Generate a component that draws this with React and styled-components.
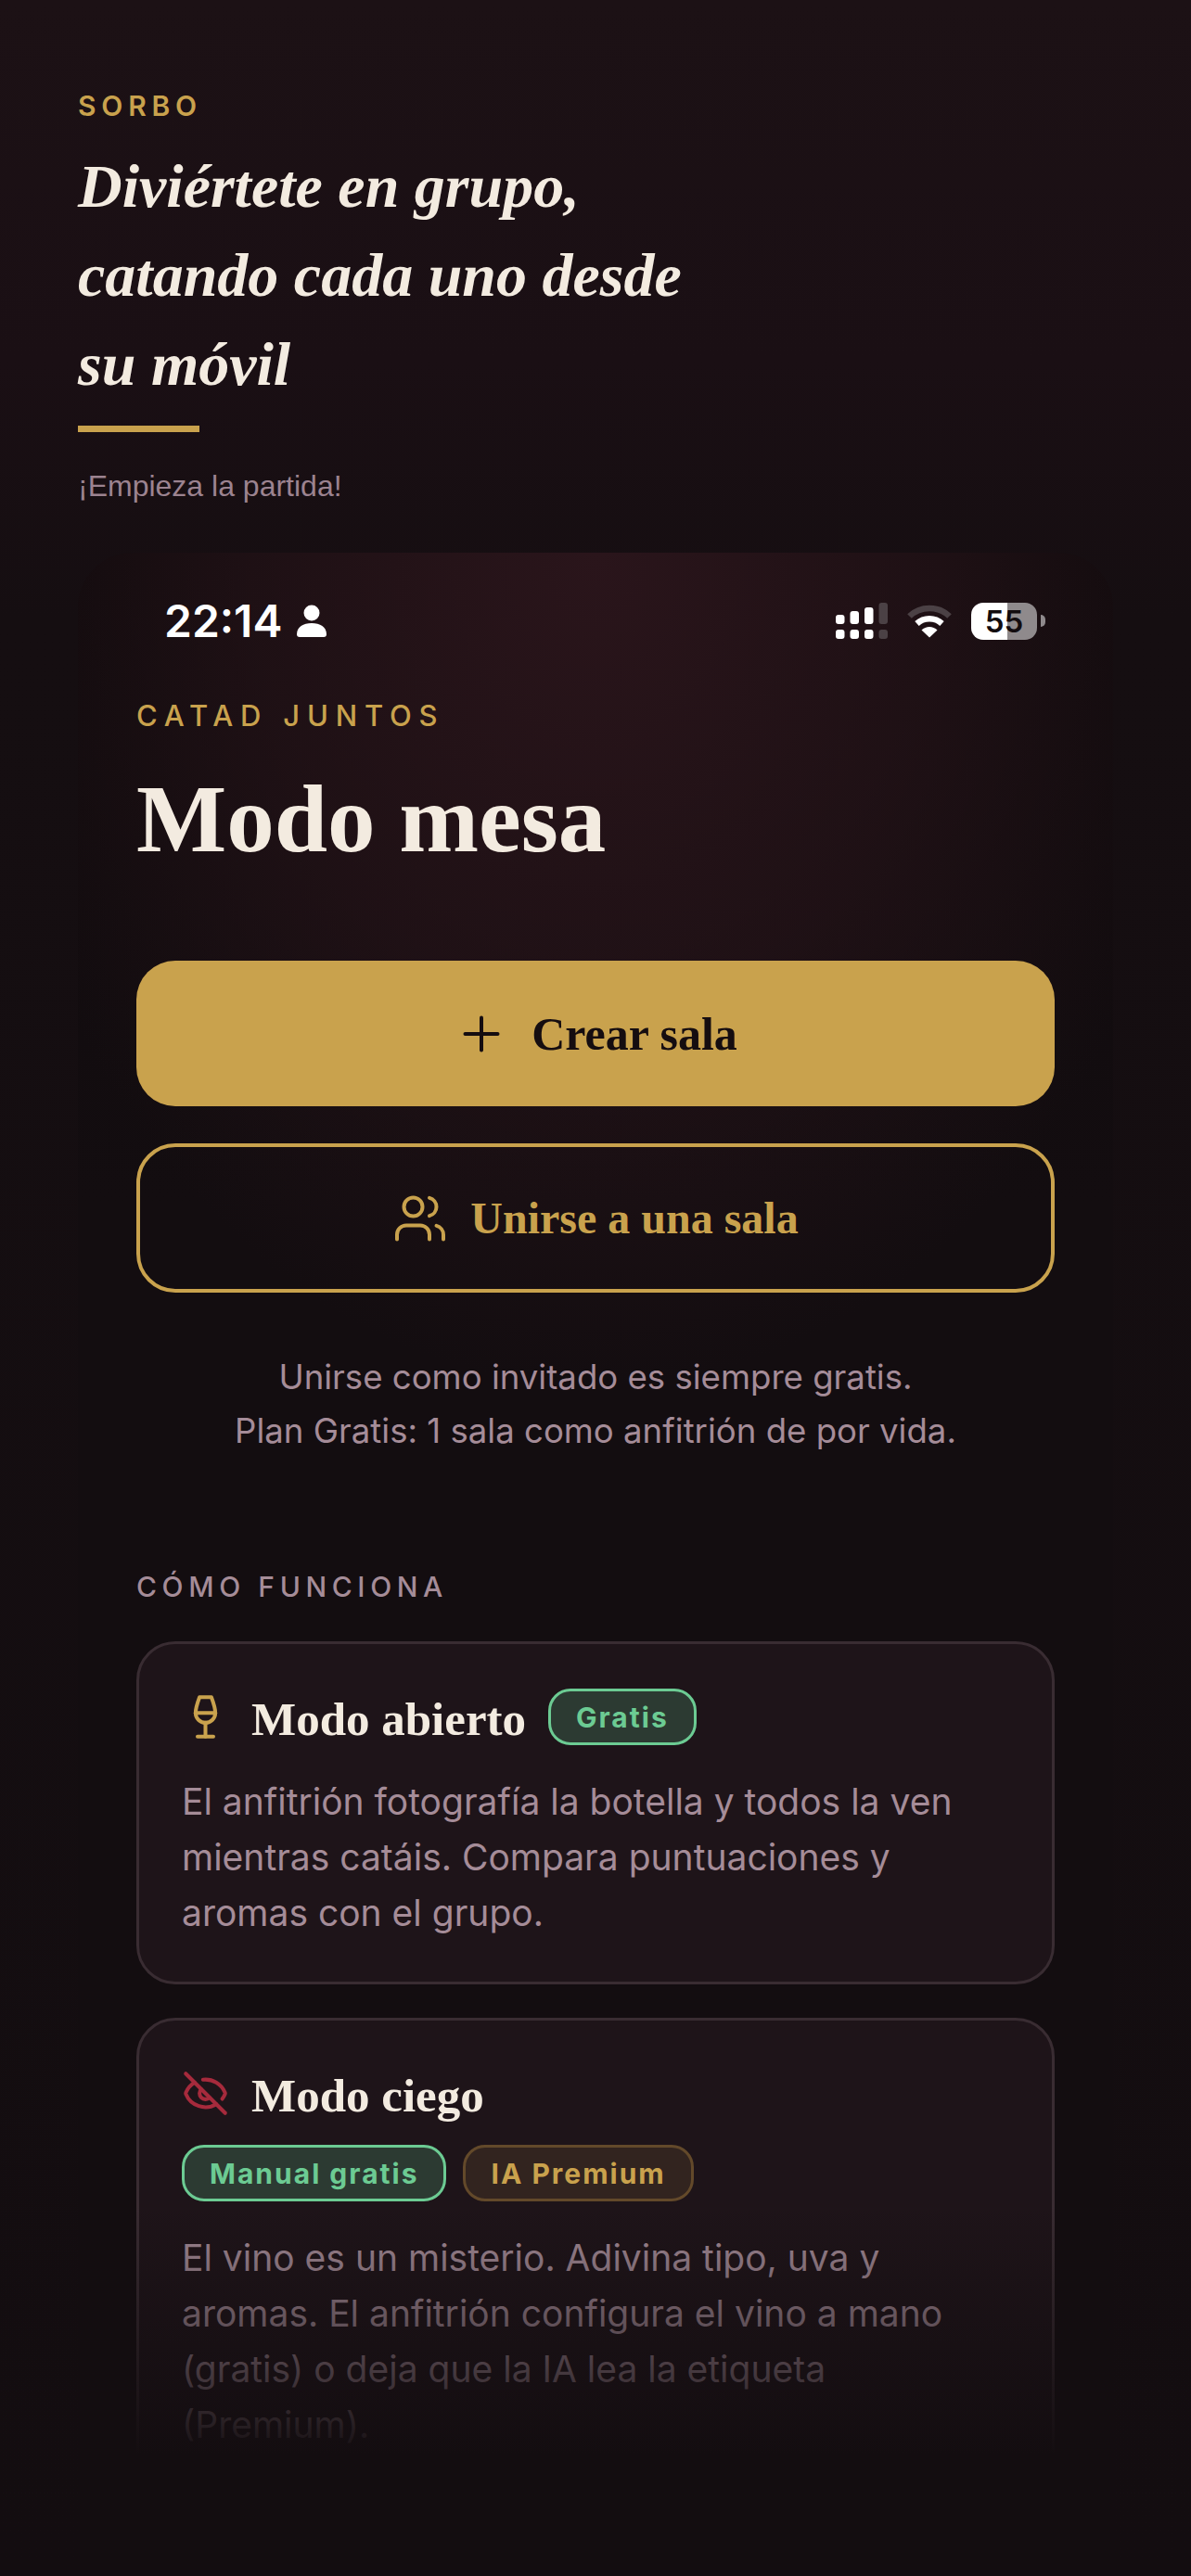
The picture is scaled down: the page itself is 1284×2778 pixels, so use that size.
import React from "react";
import styled, { createGlobalStyle } from "styled-components";
import { Plus, Users, Wine, EyeOff } from "lucide-react";

const GlobalStyle = createGlobalStyle`
  html, body {
    margin: 0;
    padding: 0;
    background: #130d10;
  }
  * {
    box-sizing: border-box;
  }
`;

const Page = styled.div`
  width: 1284px;
  height: 2778px;
  overflow: hidden;
  padding: 98px 84px 0;
  background: linear-gradient(180deg, #1c1115 0%, #1a0f14 14%, #150e11 24%, #130d10 100%);
  font-family: Inter, "Liberation Sans", sans-serif;
`;

const Hero = styled.header`
  display: flex;
  flex-direction: column;
  align-items: flex-start;
`;

const Brand = styled.div`
  font-size: 30px;
  line-height: 33px;
  font-weight: 600;
  letter-spacing: 5.8px;
  color: #c9a24d;
`;

const Tagline = styled.h1`
  margin: 22px 0 0;
  width: 700px;
  font-family: "Liberation Serif", serif;
  font-style: italic;
  font-weight: 700;
  font-size: 66px;
  line-height: 96px;
  color: #f3ebe0;
`;

const Rule = styled.div`
  width: 131px;
  height: 7px;
  margin-top: 18px;
  background: #c9a24d;
`;

const Sub = styled.p`
  margin: 40px 0 0;
  font-family: "Liberation Sans", sans-serif;
  font-size: 32px;
  line-height: 36px;
  color: #9c8390;
`;

const Screen = styled.main`
  position: relative;
  height: 2182px;
  margin-top: 54px;
  overflow: hidden;
  border-radius: 60px 60px 0 0;
  background:
    radial-gradient(ellipse 680px 900px at 50% 0, #2a151b 0%, rgba(42, 21, 27, 0.55) 55%, rgba(42, 21, 27, 0) 100%),
    linear-gradient(180deg, #0f0a0c 0, #130d10 700px);
`;

const StatusBar = styled.div`
  display: flex;
  align-items: center;
  justify-content: space-between;
  padding: 50px 82px 0 93px;
  height: 98px;
`;

const StatusGroup = styled.div`
  display: flex;
  align-items: center;
  gap: ${(p) => p.$gap}px;
`;

const Clock = styled.span`
  font-size: 48px;
  line-height: 48px;
  font-weight: 600;
  color: #fff;
`;

const Battery = styled.div`
  position: relative;
  width: 71px;
  height: 40px;
  border-radius: 13px;
  display: flex;
  align-items: center;
  justify-content: center;
  background: linear-gradient(90deg, #fff 0, #fff 55%, #8f8a8c 55%, #8f8a8c 100%);
  color: #120c0f;
  font-size: 33px;
  font-weight: 600;
  line-height: 40px;
  &::after {
    content: "";
    position: absolute;
    right: -9px;
    top: 13px;
    width: 5px;
    height: 13px;
    border-radius: 0 5px 5px 0;
    background: #8f8a8c;
  }
`;

const Content = styled.div`
  padding: 60px 63px 0;
`;

const Eyebrow = styled.div`
  font-size: 31px;
  line-height: 36px;
  font-weight: 500;
  letter-spacing: 7.8px;
  color: #c9a24d;
`;

const Title = styled.h2`
  margin: 27px 0 0;
  font-family: "Liberation Serif", serif;
  font-weight: 700;
  font-size: 103px;
  line-height: 132px;
  color: #f3ebe0;
`;

const Actions = styled.div`
  display: flex;
  flex-direction: column;
  gap: 40px;
  margin-top: 87px;
`;

const Action = styled.button`
  display: flex;
  align-items: center;
  justify-content: center;
  gap: 24px;
  width: 100%;
  height: ${(p) => (p.$outline ? 161 : 157)}px;
  border-radius: 42px;
  border: ${(p) => (p.$outline ? "4.5px solid #c9a24d" : "none")};
  background: ${(p) => (p.$outline ? "transparent" : "#c9a24d")};
  color: ${(p) => (p.$outline ? "#c9a24d" : "#150d10")};
  font-family: "Liberation Serif", serif;
  font-weight: 700;
  font-size: ${(p) => (p.$outline ? 48 : 50)}px;
  padding: 0;
`;

const Note = styled.p`
  margin: 63px 0 0;
  text-align: center;
  font-size: 36.6px;
  line-height: 57.6px;
  color: #a58c98;
`;

const SectionLabel = styled.div`
  margin-top: 121px;
  font-size: 30px;
  line-height: 36px;
  font-weight: 500;
  letter-spacing: 5.6px;
  color: #a58c98;
`;

const CardList = styled.div`
  display: flex;
  flex-direction: column;
  gap: 36px;
  margin-top: 41px;
`;

const Card = styled.article`
  padding: 48px 46px 44px;
  border: 3px solid #392c32;
  border-radius: 42px;
  background: #1e1419;
`;

const CardHead = styled.div`
  display: flex;
  align-items: center;
  gap: 24px;
  min-height: 61px;
`;

const CardTitle = styled.h3`
  margin: 0;
  padding-top: 4px;
  font-family: "Liberation Serif", serif;
  font-weight: 700;
  font-size: 51px;
  line-height: 56px;
  color: #f3ebe0;
`;

const Badge = styled.span`
  display: inline-flex;
  align-items: center;
  height: 61px;
  padding: 0 27px;
  border-radius: 24px;
  border: 3px solid ${(p) => (p.$tone === "gold" ? "#63492a" : "#6ccb93")};
  background: ${(p) => (p.$tone === "gold" ? "#32241f" : "#2c3a32")};
  color: ${(p) => (p.$tone === "gold" ? "#c9a24d" : "#6ccb93")};
  font-size: 30px;
  font-weight: 700;
  letter-spacing: 2px;
`;

const BadgeRow = styled.div`
  display: flex;
  gap: 18px;
  margin-top: 25px;
`;

const CardText = styled.p`
  margin: 31px 0 0;
  font-size: 39px;
  line-height: 60px;
  color: #a58c98;
`;

const BottomFade = styled.div`
  position: absolute;
  left: 0;
  right: 0;
  bottom: 0;
  height: 400px;
  background: linear-gradient(180deg, rgba(19, 13, 16, 0) 0%, rgba(19, 13, 16, 0.95) 65%, #130d10 67%, #130d10 100%);
  pointer-events: none;
`;

function PersonGlyph() {
  return (
    <svg width="34" height="36" viewBox="0 0 34 36" fill="#fff">
      <circle cx="17" cy="9" r="8.5" />
      <path d="M1 32c0-8 7-12 16-12s16 4 16 12c0 2-1 3-3 3H4c-2 0-3-1-3-3z" />
    </svg>
  );
}

function SignalGlyph() {
  const bars = [
    { x: 0, top: 13, fill: "#fff" },
    { x: 15.5, top: 9, fill: "#fff" },
    { x: 31, top: 5, fill: "#fff" },
    { x: 46.5, top: 0, fill: "#4b4145" },
  ];
  return (
    <svg width="56" height="40" viewBox="0 0 56 40">
      {bars.map((b) => (
        <g key={b.x} fill={b.fill}>
          <rect x={b.x} y={b.top} width="9.5" height={23 - b.top} rx="3" />
          <rect x={b.x} y="29" width="9.5" height="10" rx="3" />
        </g>
      ))}
    </svg>
  );
}

function WifiGlyph() {
  return (
    <svg width="48" height="36" viewBox="0 0 48 36" fill="none">
      <path d="M2.5 12.5C14 1 34 1 45.5 12.5" stroke="#4b4145" strokeWidth="6.5" />
      <path d="M10.5 20.5C18 13.5 30 13.5 37.5 20.5" stroke="#fff" strokeWidth="6.5" />
      <path d="M24 35.5L15.5 27.5C20 22.8 28 22.8 32.5 27.5z" fill="#fff" />
    </svg>
  );
}

export default function App() {
  return (
    <>
      <GlobalStyle />
      <Page>
        <Hero>
          <Brand>SORBO</Brand>
          <Tagline>Diviértete en grupo, catando cada uno desde su móvil</Tagline>
          <Rule />
          <Sub>¡Empieza la partida!</Sub>
        </Hero>

        <Screen>
          <StatusBar>
            <StatusGroup $gap={15}>
              <Clock>22:14</Clock>
              <PersonGlyph />
            </StatusGroup>
            <StatusGroup $gap={21}>
              <SignalGlyph />
              <WifiGlyph />
              <Battery>55</Battery>
            </StatusGroup>
          </StatusBar>

          <Content>
            <Eyebrow>CATAD JUNTOS</Eyebrow>
            <Title>Modo mesa</Title>

            <Actions>
              <Action>
                <Plus size={60} strokeWidth={1.6} />
                Crear sala
              </Action>
              <Action $outline>
                <Users size={60} strokeWidth={1.6} />
                Unirse a una sala
              </Action>
            </Actions>

            <Note>
              Unirse como invitado es siempre gratis.
              <br />
              Plan Gratis: 1 sala como anfitrión de por vida.
            </Note>

            <SectionLabel>CÓMO FUNCIONA</SectionLabel>

            <CardList>
              <Card>
                <CardHead>
                  <Wine size={51} color="#c9a24d" strokeWidth={1.9} />
                  <CardTitle>Modo abierto</CardTitle>
                  <Badge>Gratis</Badge>
                </CardHead>
                <CardText>
                  El anfitrión fotografía la botella y todos la ven mientras catáis. Compara puntuaciones y
                  aromas con el grupo.
                </CardText>
              </Card>

              <Card>
                <CardHead>
                  <EyeOff size={51} color="#a62a3c" strokeWidth={1.9} />
                  <CardTitle>Modo ciego</CardTitle>
                </CardHead>
                <BadgeRow>
                  <Badge>Manual gratis</Badge>
                  <Badge $tone="gold">IA Premium</Badge>
                </BadgeRow>
                <CardText>
                  El vino es un misterio. Adivina tipo, uva y aromas. El anfitrión configura el vino a mano
                  (gratis) o deja que la IA lea la etiqueta (Premium).
                </CardText>
              </Card>
            </CardList>
          </Content>

          <BottomFade />
        </Screen>
      </Page>
    </>
  );
}
